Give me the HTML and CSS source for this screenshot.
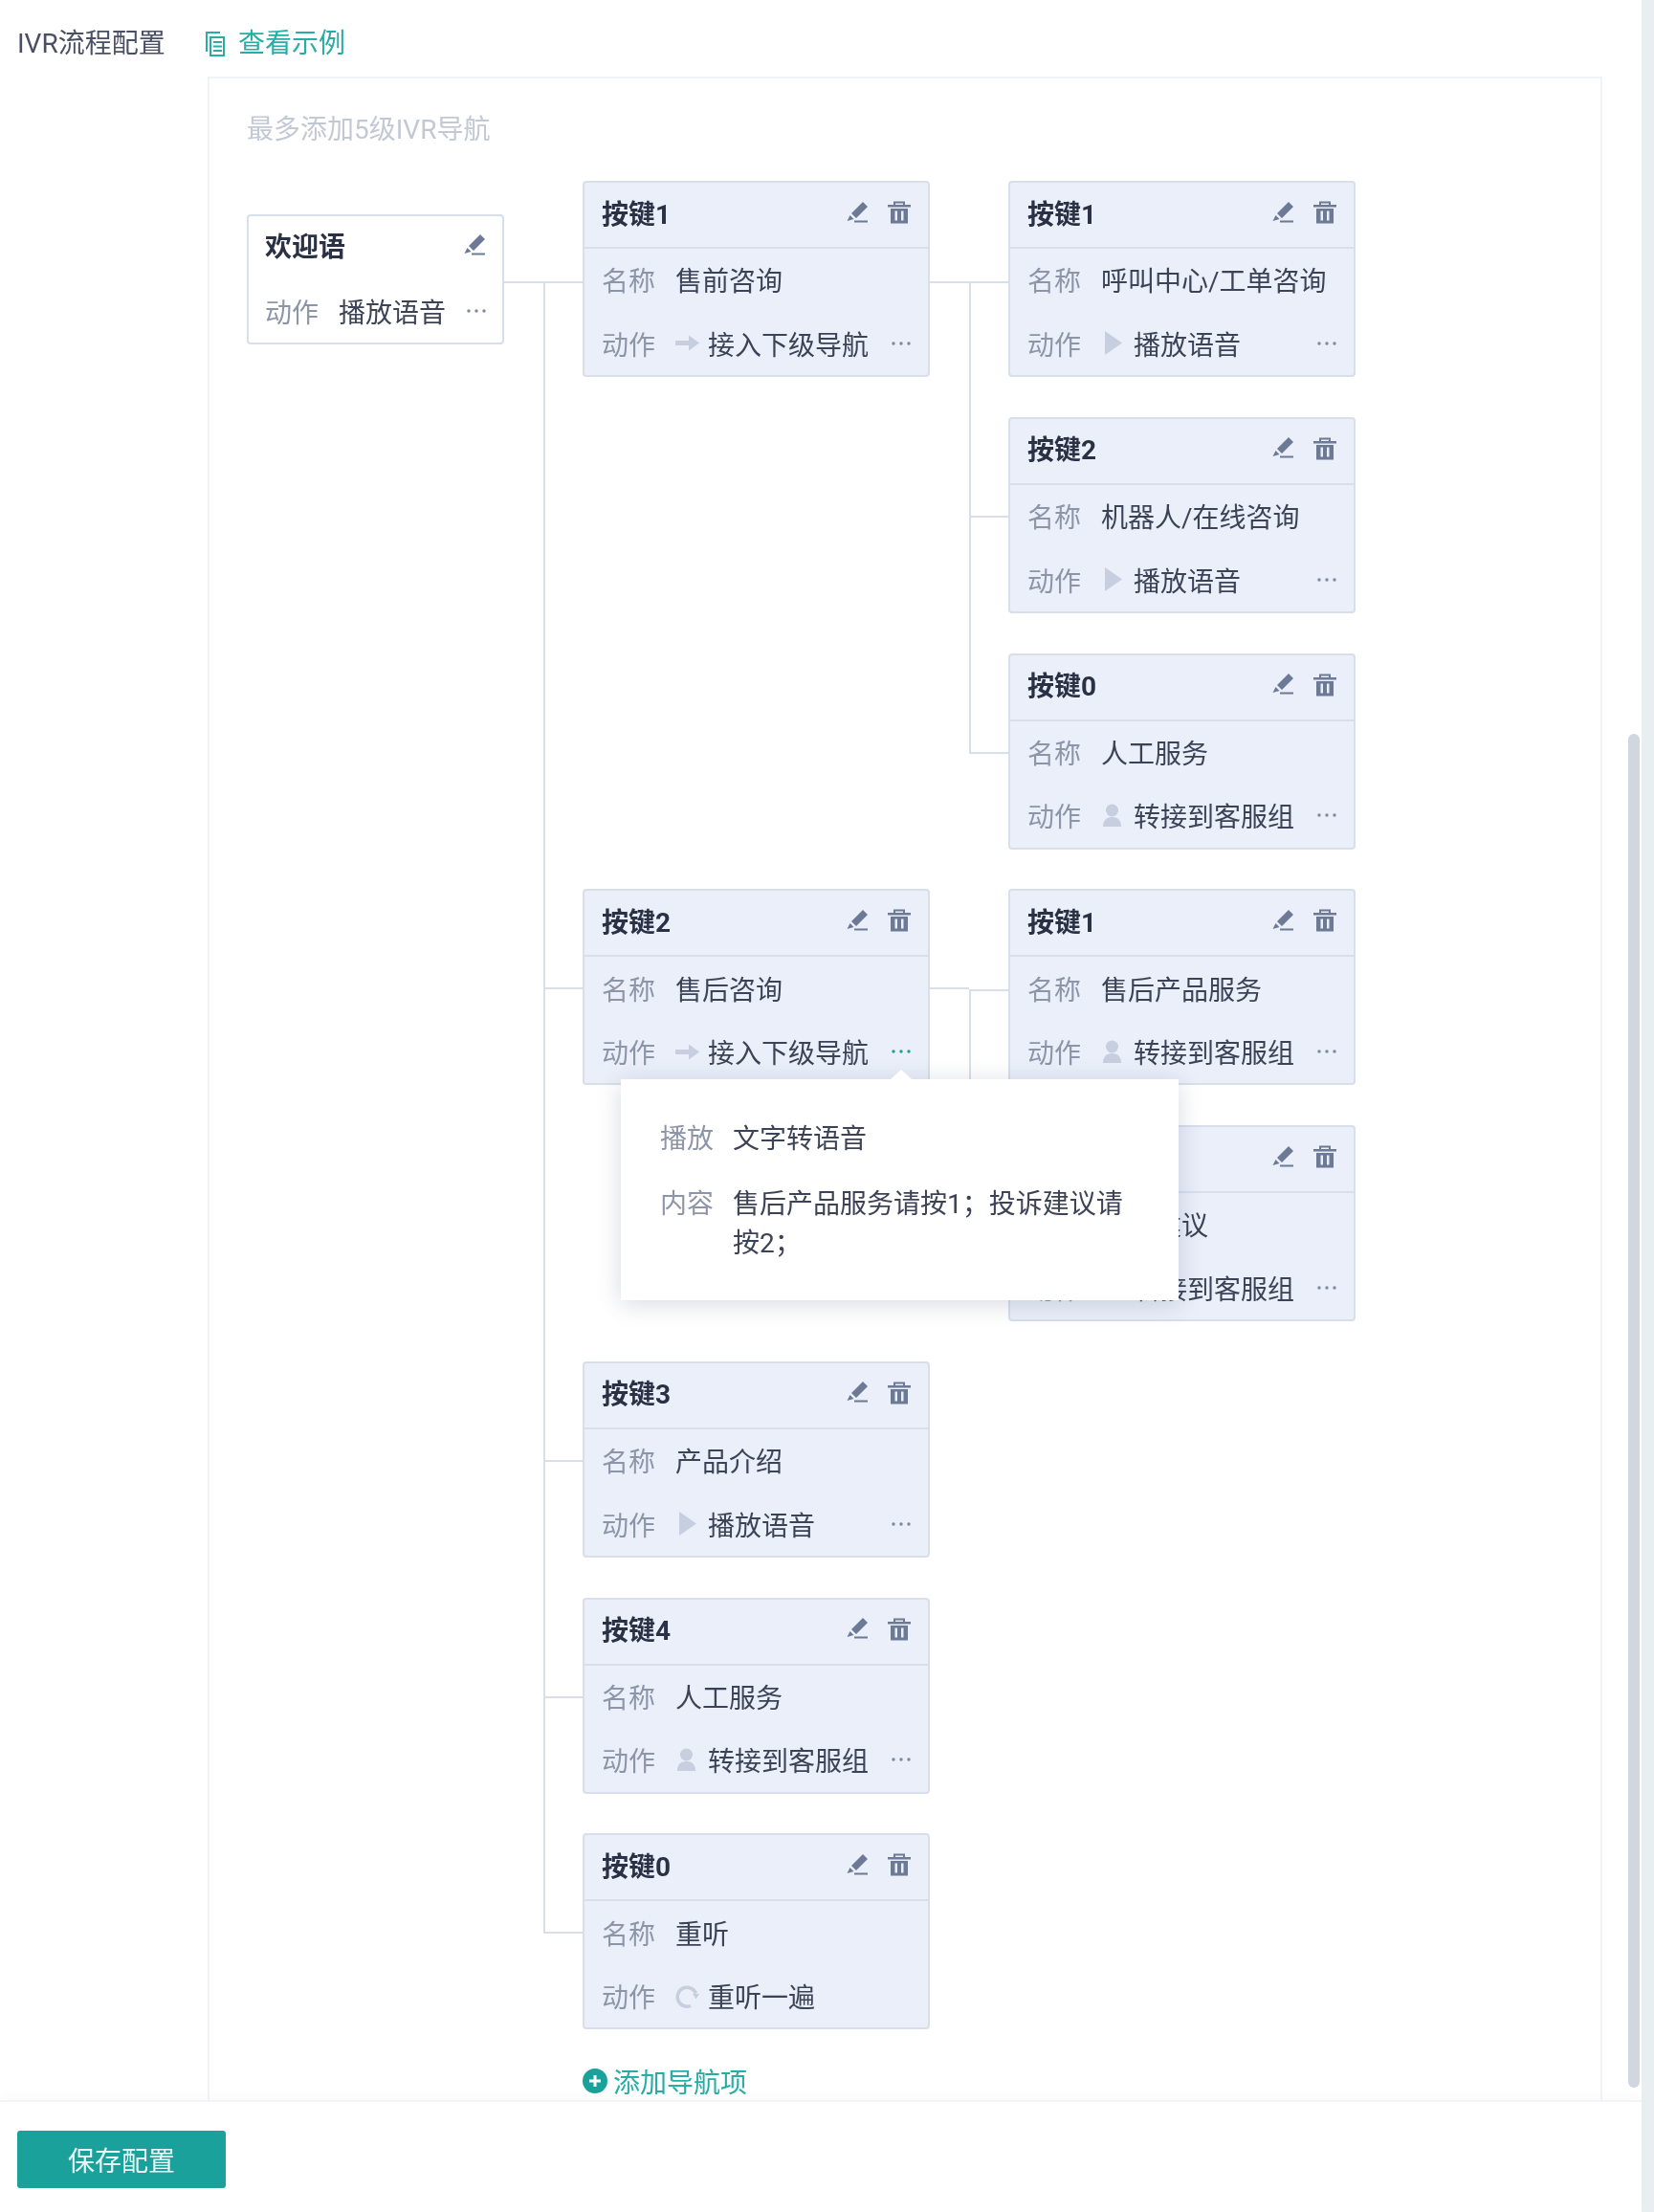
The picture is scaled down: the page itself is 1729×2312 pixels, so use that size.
FILE: index.html
```html
<!DOCTYPE html>
<html lang="zh-CN">
<head>
  <meta charset="UTF-8" />
  <title>IVR流程配置</title>
  <link rel="stylesheet" href="styles.css">
</head>
<body>

<!-- Icons -->
<svg class="sprite" xmlns="http://www.w3.org/2000/svg">
  <symbol id="i-edit" viewBox="0 0 23 22">
    <path d="M17 0l5 5-12 12-5-5zM3.500 14l4 4-7 2zM8 19.500h14v2H8z"/>
  </symbol>
  <symbol id="i-trash" viewBox="0 0 24 24">
    <path fill-rule="evenodd" d="M6 1h12v3.500h6V7H0V4.500h6zM8 3v1.500h8V3zM3 8.500h18V24H3zM7.500 11v10H10V11zM14 11v10h2.500V11z"/>
  </symbol>
  <symbol id="i-dots" viewBox="0 0 20 4">
    <circle cx="2" cy="2" r="1.700"/><circle cx="10" cy="2" r="1.700"/><circle cx="18" cy="2" r="1.700"/>
  </symbol>
  <symbol id="i-arrow" viewBox="0 0 25 25">
    <path d="M0 10h14V4.500l11 8-11 8V15H0z"/>
  </symbol>
  <symbol id="i-play" viewBox="0 0 25 25">
    <path d="M4 0l18 12.500L4 25z"/>
  </symbol>
  <symbol id="i-person" viewBox="0 0 25 25">
    <circle cx="11.500" cy="7" r="6.500"/><path d="M2 24c0-6 3-10 9.500-10S21 18 21 24z"/>
  </symbol>
  <symbol id="i-redo" viewBox="0 0 25 25">
    <path fill="none" stroke="currentColor" stroke-width="3.500" d="M16 22.500A10 10 0 1 1 21.500 9.500"/>
    <path d="M18 10h7l-3.500 5.500z"/>
  </symbol>
</svg>

<div class="main">
  <div class="scroll">
    <div class="cfg-head">
      <span class="cfg-label">IVR流程配置</span>
      <a class="sample-link">
        <svg class="sample-ico" viewBox="0 0 20 26" fill="none" stroke="currentColor" stroke-width="2">
          <path d="M15 1H1v20"/><rect x="5" y="6" width="14" height="19"/><path d="M8 11h9M8 15.500h9M8 20h9"/>
        </svg>
        查看示例
      </a>
    </div>

    <div class="panel">
      <p class="hint">最多添加5级IVR导航</p>

      <div class="tree">
        <!-- Welcome node -->
        <div class="welcome">
          <div class="welcome-head">
            <span class="card-title">欢迎语</span>
            <svg class="ico-edit"><use href="#i-edit"/></svg>
          </div>
          <div class="welcome-row">
            <span class="lbl">动作</span>
            <span class="val">播放语音</span>
            <svg class="dots"><use href="#i-dots"/></svg>
          </div>
        </div>

        <div class="level">
          <!-- 按键1 -->
          <div class="branch has-sub">
            <div class="card">
              <div class="card-head"><span class="card-title">按键1</span><svg class="ico-edit"><use href="#i-edit"/></svg><svg class="ico-trash"><use href="#i-trash"/></svg></div>
              <div class="row"><span class="lbl">名称</span><span class="val">售前咨询</span></div>
              <div class="row"><span class="lbl">动作</span><svg class="ico-act"><use href="#i-arrow"/></svg><span class="val-act">接入下级导航</span><svg class="dots"><use href="#i-dots"/></svg></div>
            </div>
            <div class="level">
              <div class="branch">
                <div class="card">
                  <div class="card-head"><span class="card-title">按键1</span><svg class="ico-edit"><use href="#i-edit"/></svg><svg class="ico-trash"><use href="#i-trash"/></svg></div>
                  <div class="row"><span class="lbl">名称</span><span class="val">呼叫中心/工单咨询</span></div>
                  <div class="row"><span class="lbl">动作</span><svg class="ico-act"><use href="#i-play"/></svg><span class="val-act">播放语音</span><svg class="dots"><use href="#i-dots"/></svg></div>
                </div>
              </div>
              <div class="branch">
                <div class="card">
                  <div class="card-head"><span class="card-title">按键2</span><svg class="ico-edit"><use href="#i-edit"/></svg><svg class="ico-trash"><use href="#i-trash"/></svg></div>
                  <div class="row"><span class="lbl">名称</span><span class="val">机器人/在线咨询</span></div>
                  <div class="row"><span class="lbl">动作</span><svg class="ico-act"><use href="#i-play"/></svg><span class="val-act">播放语音</span><svg class="dots"><use href="#i-dots"/></svg></div>
                </div>
              </div>
              <div class="branch">
                <div class="card">
                  <div class="card-head"><span class="card-title">按键0</span><svg class="ico-edit"><use href="#i-edit"/></svg><svg class="ico-trash"><use href="#i-trash"/></svg></div>
                  <div class="row"><span class="lbl">名称</span><span class="val">人工服务</span></div>
                  <div class="row"><span class="lbl">动作</span><svg class="ico-act"><use href="#i-person"/></svg><span class="val-act">转接到客服组</span><svg class="dots"><use href="#i-dots"/></svg></div>
                </div>
              </div>
            </div>
          </div>

          <!-- 按键2 -->
          <div class="branch has-sub">
            <div class="card">
              <div class="card-head"><span class="card-title">按键2</span><svg class="ico-edit"><use href="#i-edit"/></svg><svg class="ico-trash"><use href="#i-trash"/></svg></div>
              <div class="row"><span class="lbl">名称</span><span class="val">售后咨询</span></div>
              <div class="row"><span class="lbl">动作</span><svg class="ico-act"><use href="#i-arrow"/></svg><span class="val-act">接入下级导航</span><svg class="dots active"><use href="#i-dots"/></svg></div>
              <!-- Popover -->
              <div class="popover">
                <div class="pop-row"><span class="lbl">播放</span><span class="pop-val">文字转语音</span></div>
                <div class="pop-row"><span class="lbl">内容</span><span class="pop-val">售后产品服务请按1；投诉建议请按2；</span></div>
              </div>
            </div>
            <div class="level">
              <div class="branch">
                <div class="card">
                  <div class="card-head"><span class="card-title">按键1</span><svg class="ico-edit"><use href="#i-edit"/></svg><svg class="ico-trash"><use href="#i-trash"/></svg></div>
                  <div class="row"><span class="lbl">名称</span><span class="val">售后产品服务</span></div>
                  <div class="row"><span class="lbl">动作</span><svg class="ico-act"><use href="#i-person"/></svg><span class="val-act">转接到客服组</span><svg class="dots"><use href="#i-dots"/></svg></div>
                </div>
              </div>
              <div class="branch">
                <div class="card">
                  <div class="card-head"><span class="card-title">按键2</span><svg class="ico-edit"><use href="#i-edit"/></svg><svg class="ico-trash"><use href="#i-trash"/></svg></div>
                  <div class="row"><span class="lbl">名称</span><span class="val">投诉建议</span></div>
                  <div class="row"><span class="lbl">动作</span><svg class="ico-act"><use href="#i-person"/></svg><span class="val-act">转接到客服组</span><svg class="dots"><use href="#i-dots"/></svg></div>
                </div>
              </div>
            </div>
          </div>

          <!-- 按键3 -->
          <div class="branch">
            <div class="card">
              <div class="card-head"><span class="card-title">按键3</span><svg class="ico-edit"><use href="#i-edit"/></svg><svg class="ico-trash"><use href="#i-trash"/></svg></div>
              <div class="row"><span class="lbl">名称</span><span class="val">产品介绍</span></div>
              <div class="row"><span class="lbl">动作</span><svg class="ico-act"><use href="#i-play"/></svg><span class="val-act">播放语音</span><svg class="dots"><use href="#i-dots"/></svg></div>
            </div>
          </div>

          <!-- 按键4 -->
          <div class="branch">
            <div class="card">
              <div class="card-head"><span class="card-title">按键4</span><svg class="ico-edit"><use href="#i-edit"/></svg><svg class="ico-trash"><use href="#i-trash"/></svg></div>
              <div class="row"><span class="lbl">名称</span><span class="val">人工服务</span></div>
              <div class="row"><span class="lbl">动作</span><svg class="ico-act"><use href="#i-person"/></svg><span class="val-act">转接到客服组</span><svg class="dots"><use href="#i-dots"/></svg></div>
            </div>
          </div>

          <!-- 按键0 -->
          <div class="branch">
            <div class="card">
              <div class="card-head"><span class="card-title">按键0</span><svg class="ico-edit"><use href="#i-edit"/></svg><svg class="ico-trash"><use href="#i-trash"/></svg></div>
              <div class="row"><span class="lbl">名称</span><span class="val">重听</span></div>
              <div class="row"><span class="lbl">动作</span><svg class="ico-act"><use href="#i-redo"/></svg><span class="val-act">重听一遍</span></div>
            </div>
          </div>
        </div>
      </div>

      <a class="add-link">
        <svg class="add-ico" viewBox="0 0 26 26"><circle cx="13" cy="13" r="13" fill="#1aa19c"/><path d="M7 13h12M13 7v12" stroke="#fff" stroke-width="3"/></svg>
        添加导航项
      </a>
    </div>

    <div class="scroll-thumb"></div>
  </div>

  <div class="footer">
    <button class="save-btn">保存配置</button>
  </div>
</div>

</body>
</html>
```
FILE: styles.css
```css
/* Base */
* {
  box-sizing: border-box;
}

body {
  margin: 0;
  background: #e9eff1;
  font-family: Roboto, "Noto Sans CJK SC", sans-serif;
  font-size: 28px;
  color: #3d4356;
}

.sprite {
  display: none;
}

.main {
  width: 1716px;
  height: 2312px;
  background: #fff;
  display: flex;
  flex-direction: column;
  filter: blur(0.6px);
}

.scroll {
  position: relative;
  height: 2195px;
  overflow: hidden;
}

/* Header */
.cfg-head {
  display: flex;
  align-items: center;
  height: 40px;
  margin: 26px 0 14px 18px;
  line-height: 40px;
}

.cfg-label {
  width: 197px;
  color: #4a5064;
}

.sample-link {
  display: flex;
  align-items: center;
  color: #27ada5;
}

.sample-ico {
  width: 20px;
  height: 26px;
  margin-right: 14px;
}

/* Panel */
.panel {
  width: 1458px;
  height: 2300px;
  margin-left: 217px;
  padding: 34px 0 0 39px;
  border: 2px solid #f0f3fa;
}

.hint {
  margin: 0 0 33px;
  line-height: 40px;
  color: #c3c8d5;
}

/* Tree */
.tree {
  display: flex;
  align-items: flex-start;
}

.level {
  position: relative;
  display: flex;
  flex-direction: column;
  gap: 41.75px;
}

.level::before {
  content: "";
  position: absolute;
  left: -41px;
  top: 105px;
  bottom: 100px;
  width: 2px;
  background: #d8deea;
}

.branch {
  position: relative;
  display: flex;
  gap: 82px;
}

.branch::before {
  content: "";
  position: absolute;
  left: -41px;
  top: 103px;
  width: 41px;
  height: 2px;
  background: #d8deea;
}

.branch:first-child::before {
  top: 105px;
}

.has-sub::after {
  content: "";
  position: absolute;
  left: 363px;
  top: 103px;
  width: 41px;
  height: 2px;
  background: #d8deea;
}

.has-sub:first-child::after {
  top: 105px;
}

/* Welcome node */
.welcome {
  position: relative;
  flex: none;
  width: 269px;
  height: 136px;
  margin: 35px 82px 0 0;
  padding: 0 17px;
  background: #fff;
  border: 2px solid #d8deea;
  border-radius: 4px;
}

.welcome::after {
  content: "";
  position: absolute;
  right: -44px;
  top: 68px;
  width: 42px;
  height: 2px;
  background: #d8deea;
}

.welcome-head {
  display: flex;
  align-items: center;
  justify-content: space-between;
  height: 59px;
}

.welcome-row {
  display: flex;
  align-items: center;
  height: 70px;
  padding-top: 9px;
}

.welcome-row .dots {
  margin-left: auto;
}

/* Key card */
.card {
  position: relative;
  flex: none;
  width: 363px;
  height: 205px;
  background: #eaeff9;
  border: 2px solid #d8deea;
  border-radius: 4px;
}

.card-head {
  display: flex;
  align-items: center;
  height: 69px;
  padding: 0 18px 6px 18px;
  border-bottom: 2px solid #d8deea;
  margin-bottom: -1px;
}

.card-title {
  flex: 1;
  font-weight: 700;
  color: #2b3145;
}

.row {
  display: flex;
  align-items: center;
  height: 66.500px;
  padding: 0 18px 0 18px;
}

.lbl {
  flex: none;
  margin-right: 21px;
  color: #8d95a8;
}

.val-act {
  flex: 1;
}

.val,
.val-act,
.pop-val {
  color: #3d4356;
  white-space: nowrap;
}

/* Icons */
.ico-edit {
  flex: none;
  width: 23px;
  height: 22px;
  fill: #6c7a96;
}

.ico-trash {
  flex: none;
  width: 24px;
  height: 25px;
  margin-left: 20px;
  fill: #6c7a96;
}

.ico-act {
  flex: none;
  width: 25px;
  height: 25px;
  margin-right: 9px;
  fill: #c6cedf;
  color: #c6cedf;
}

.dots {
  flex: none;
  width: 20px;
  height: 4px;
  fill: #7f889c;
}

.dots.active {
  fill: #1aa19c;
}

/* Popover */
.popover {
  position: absolute;
  z-index: 5;
  left: 38px;
  top: 197px;
  width: 583px;
  height: 231px;
  padding: 42px 41px 0;
  background: #fff;
  box-shadow: 0 4px 24px rgba(60, 70, 100, 0.2);
}

.popover::before {
  content: "";
  position: absolute;
  left: 282px;
  top: -10px;
  border-left: 11px solid transparent;
  border-right: 11px solid transparent;
  border-bottom: 10px solid #fff;
}

.pop-row {
  display: flex;
  line-height: 41px;
  margin-bottom: 26.500px;
}

.pop-row .lbl {
  margin-right: 20px;
}

.pop-val {
  width: 430px;
  white-space: normal;
}

/* Add link */
.add-link {
  display: flex;
  align-items: center;
  height: 40px;
  margin: 34px 0 0 351px;
  color: #27ada5;
}

.add-ico {
  width: 26px;
  height: 26px;
  margin-right: 6px;
}

/* Scrollbar thumb */
.scroll-thumb {
  position: absolute;
  left: 1702px;
  top: 767px;
  width: 12px;
  height: 1415px;
  border-radius: 6px;
  background: #d1d6df;
}

/* Footer */
.footer {
  position: relative;
  flex: 1;
  padding: 30px 0 0 18px;
  background: #fff;
  border-top: 2px solid #f3f4f6;
  box-shadow: 0 -6px 10px rgba(0, 0, 0, 0.02);
}

.save-btn {
  display: block;
  width: 218px;
  height: 60px;
  padding: 0;
  border: none;
  border-radius: 3px;
  background: #1aa19c;
  color: #e8f6f5;
  font: inherit;
}
```
